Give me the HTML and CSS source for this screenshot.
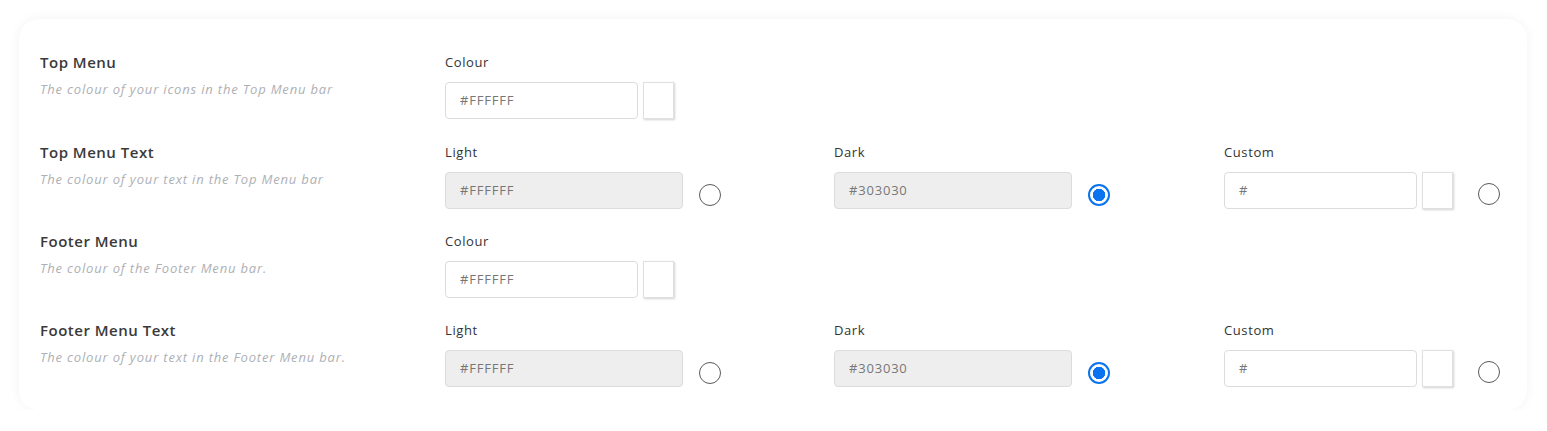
FILE: index.html
```html
<!DOCTYPE html>
<html>
<head>
<meta charset="utf-8">
<link rel="stylesheet" href="styles.css">
</head>
<body>
<div class="card">
  <div class="row first">
    <div class="info">
      <div class="title">Top Menu</div>
      <div class="desc">The colour of your icons in the Top Menu bar</div>
    </div>
    <div class="field">
      <div class="label">Colour</div>
      <div class="controls">
        <div class="input short">#FFFFFF</div>
        <div class="swatch"></div>
      </div>
    </div>
  </div>
  <div class="row">
    <div class="info">
      <div class="title">Top Menu Text</div>
      <div class="desc">The colour of your text in the Top Menu bar</div>
    </div>
    <div class="field">
      <div class="label">Light</div>
      <div class="controls">
        <div class="input long disabled">#FFFFFF</div>
        <div class="radio"></div>
      </div>
    </div>
    <div class="field">
      <div class="label">Dark</div>
      <div class="controls">
        <div class="input long disabled">#303030</div>
        <div class="radio checked"></div>
      </div>
    </div>
    <div class="field">
      <div class="label">Custom</div>
      <div class="controls">
        <div class="input short">#</div>
        <div class="swatch"></div>
        <div class="radio custom"></div>
      </div>
    </div>
  </div>
  <div class="row">
    <div class="info">
      <div class="title">Footer Menu</div>
      <div class="desc">The colour of the Footer Menu bar.</div>
    </div>
    <div class="field">
      <div class="label">Colour</div>
      <div class="controls">
        <div class="input short">#FFFFFF</div>
        <div class="swatch"></div>
      </div>
    </div>
  </div>
  <div class="row">
    <div class="info">
      <div class="title">Footer Menu Text</div>
      <div class="desc">The colour of your text in the Footer Menu bar.</div>
    </div>
    <div class="field">
      <div class="label">Light</div>
      <div class="controls">
        <div class="input long disabled">#FFFFFF</div>
        <div class="radio"></div>
      </div>
    </div>
    <div class="field">
      <div class="label">Dark</div>
      <div class="controls">
        <div class="input long disabled">#303030</div>
        <div class="radio checked"></div>
      </div>
    </div>
    <div class="field">
      <div class="label">Custom</div>
      <div class="controls">
        <div class="input short">#</div>
        <div class="swatch"></div>
        <div class="radio custom"></div>
      </div>
    </div>
  </div>
</div>
</body>
</html>
```
FILE: styles.css
```css
html, body {
  margin: 0;
  padding: 0;
  background: #ffffff;
}
body {
  font-family: "Open Sans", "Liberation Sans", sans-serif;
  color: #333333;
  padding: 19px 20px 0 19px;
}
.card {
  width: 1508px;
  box-sizing: border-box;
  background: #ffffff;
  border-radius: 20px;
  box-shadow: 0 0 12px rgba(0, 0, 0, 0.05);
  padding: 33px 20px 1px 21px;
}
.row {
  display: grid;
  grid-template-columns: 405px 389px 390px 1fr;
  height: 89px;
}
.row.first {
  height: 90px;
}
.title {
  font-size: 15px;
  font-weight: 600;
  line-height: 20px;
  color: #3a3a3a;
  letter-spacing: 0.5px;
}
.desc {
  margin-top: 7px;
  font-size: 13px;
  font-style: italic;
  font-weight: 400;
  line-height: 20px;
  color: #aeb0b5;
  letter-spacing: 0.82px;
}
.label {
  font-size: 13px;
  line-height: 20px;
  height: 20px;
  margin-bottom: 10px;
  color: #333333;
  letter-spacing: 0.6px;
}
.controls {
  display: flex;
  align-items: flex-start;
}
.input {
  box-sizing: border-box;
  height: 37px;
  border: 1px solid #dcdcdc;
  border-radius: 4px;
  background: #ffffff;
  padding-left: 14px;
  font-size: 13px;
  line-height: 35px;
  color: #777777;
  letter-spacing: 0.8px;
}
.input.short {
  width: 193px;
}
.input.long {
  width: 238px;
}
.input.disabled {
  background: #eeeeee;
}
.swatch {
  box-sizing: border-box;
  width: 31px;
  height: 37px;
  margin-left: 5px;
  border: 1px solid #e0e0e0;
  background: #ffffff;
  box-shadow: 1px 1px 2px rgba(0, 0, 0, 0.18);
}
.radio {
  box-sizing: border-box;
  width: 22px;
  height: 22px;
  margin-left: 16px;
  margin-top: 12px;
  border-radius: 50%;
  border: 1px solid #5a5a5a;
  background: #ffffff;
}
.radio.custom {
  margin-left: 25px;
  margin-top: 11px;
}
.radio.checked {
  border: 2px solid #0a74f0;
  background: radial-gradient(circle, #0a74f0 0 6px, #ffffff 6.5px);
}
```
